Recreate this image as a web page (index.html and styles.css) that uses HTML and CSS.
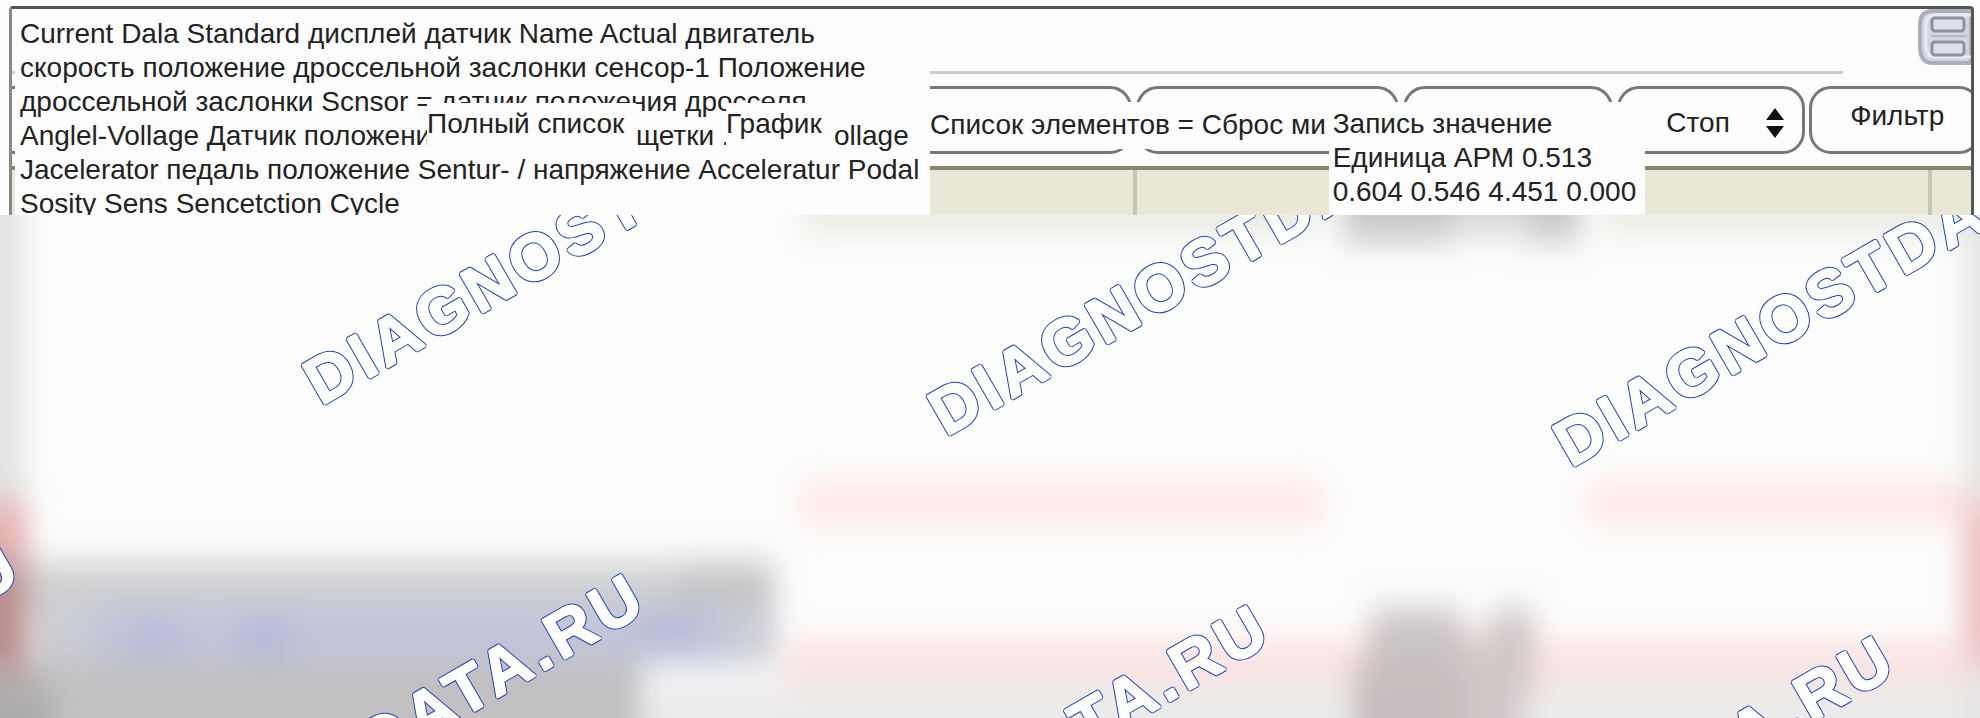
FILE: index.html
```
<!DOCTYPE html>
<html lang="ru">
<head>
    <meta charset="UTF-8">
    <meta name="viewport" content="width=device-width, initial-scale=1.0">
    <title>Current Data</title>
    <link rel="stylesheet" href="styles.css">
</head>
<body>
    <main class="panel">
        <div class="window">
            <div class="titlebar">
                <button class="layout-btn" type="button" aria-label="Layout">
                    <svg viewBox="0 0 54 56" width="54" height="56">
                        <path d="M54 2H16Q3 2 3 15V38Q3 54 16 54H54Z" fill="#d3d7e2" stroke="#aaafba" stroke-width="4"/>
                        <path d="M54 6H18Q9 6 9 16V38Q10 48 18 48H54" fill="none" stroke="#e8ebf3" stroke-width="3"/>
                        <path d="M14 27H50" stroke="#b4b9c6" stroke-width="2"/>
                        <rect x="15" y="9" width="32" height="13" rx="3" fill="#dde1ec" stroke="#8d93a0" stroke-width="3"/>
                        <rect x="15" y="33" width="32" height="13" rx="3" fill="#dde1ec" stroke="#8d93a0" stroke-width="3"/>
                    </svg>
                </button>
            </div>
            <div class="toolbar">
                <div class="tab"></div>
                <div class="tab"></div>
                <div class="tab"></div>
                <button class="tab stop" type="button">
                    <span>Стоп</span>
                    <svg viewBox="0 0 20 34" width="20" height="34">
                        <path d="M10 2L19 14H1ZM10 32L1 20H19Z" fill="#111"/>
                    </svg>
                </button>
                <button class="tab filter" type="button">Фильтр</button>
            </div>
            <div class="table-head">
                <div></div>
                <div></div>
                <div></div>
            </div>
        </div>

        <div class="labels">
            <div class="description">
                <p>Current Dala Standard дисплей датчик Name Actual двигатель</p>
                <p>скорость положение дроссельной заслонки сенсор-1 Положение</p>
                <p>дроссельной заслонки Scnsor = датчик положения дросселя</p>
                <div class="split">
                    <span class="cut">Anglel-Vollage Датчик положени</span>
                    <button class="chip" type="button">Полный список</button>
                    <span>щетки .</span>
                    <button class="chip" type="button">График</button>
                    <span>ollage</span>
                </div>
                <p>Jacelerator педаль положение Sentur- / напряжение Acceleratur Podal</p>
                <p>Sosity Sens Sencetction Cycle</p>
            </div>
            <button class="list-btn" type="button">Список элементов = Сброс ми</button>
            <div class="values">
                <p>Запись значение</p>
                <p>Единица АРМ 0.513</p>
                <p>0.604 0.546 4.451 0.000</p>
            </div>
        </div>
    </main>

    <section class="preview">
        <svg viewBox="0 0 1980 503" preserveAspectRatio="xMinYMin slice">
            <defs>
                <filter id="soft" x="-20%" y="-50%" width="140%" height="200%">
                    <feGaussianBlur stdDeviation="14 17"/>
                </filter>
            </defs>
            <!-- header remains and row bands -->
            <g filter="url(#soft)">
                <rect x="800" y="-80" width="520" height="100" fill="#ebebe5"/>
                <rect x="1600" y="-80" width="460" height="100" fill="#ebebe5"/>
                <rect x="1342" y="-80" width="110" height="107" fill="#c8c8c8"/>
                <rect x="1452" y="-80" width="76" height="100" fill="#d8d8d8"/>
                <rect x="1528" y="-80" width="52" height="107" fill="#c8c8c8"/>
                <rect x="800" y="269" width="522" height="38" fill="#fee3e2"/>
                <rect x="1588" y="269" width="400" height="38" fill="#fee3e2"/>
                <rect x="640" y="468" width="1400" height="120" fill="#ebebeb"/>
                <rect x="780" y="426" width="1200" height="44" fill="#fbe2e2"/>
            </g>
            <!-- text blocks -->
            <g filter="url(#soft)">
                <rect x="16" y="348" width="760" height="55" fill="#cecfcf"/>
                <rect x="30" y="390" width="746" height="60" fill="#cccdd4"/>
                <rect x="-60" y="446" width="702" height="140" fill="#c2c0c0"/>
                <rect x="92" y="395" width="640" height="50" fill="#c1c5da"/>
                <rect x="130" y="402" width="50" height="40" fill="#b6bbda"/>
                <rect x="240" y="402" width="50" height="40" fill="#b2b8dc"/>
                <rect x="640" y="396" width="56" height="40" fill="#b4b9d8"/>
                <rect x="676" y="348" width="94" height="38" fill="#c2c2c2"/>
                <rect x="1370" y="394" width="92" height="60" fill="#cac4c4"/>
                <rect x="1490" y="394" width="44" height="80" fill="#cec6c6"/>
                <rect x="1354" y="444" width="108" height="140" fill="#c6bebe"/>
                <rect x="1462" y="424" width="60" height="160" fill="#d0c8c8"/>
            </g>
            <!-- edges -->
            <g filter="url(#soft)">
                <rect x="-40" y="-80" width="64" height="430" fill="#e2e2e2"/>
                <rect x="1966" y="-80" width="60" height="680" fill="#e4e4e2"/>
                <rect x="-40" y="285" width="68" height="170" fill="#e6b4b4"/>
                <rect x="-40" y="345" width="68" height="115" fill="#b88e8e"/>
                <rect x="-40" y="470" width="90" height="120" fill="#aaa"/>
                <rect x="1964" y="290" width="60" height="160" fill="#ecc0be"/>
            </g>
            <g class="watermark-line">
                <g id="watermark">
                    <text transform="translate(321 191) rotate(-30)">DIAGNOSTDATA.RU</text>
                    <text transform="translate(946 222) rotate(-30)">DIAGNOSTDATA.RU</text>
                    <text transform="translate(1571 253) rotate(-30)">DIAGNOSTDATA.RU</text>
                    <text class="tail" transform="translate(26 363) rotate(-30)">DIAGNOSTDATA.RU</text>
                    <text class="tail" transform="translate(651 394) rotate(-30)">DIAGNOSTDATA.RU</text>
                    <text class="tail" transform="translate(1276 425) rotate(-30)">DIAGNOSTDATA.RU</text>
                    <text class="tail" transform="translate(1901 456) rotate(-30)">DIAGNOSTDATA.RU</text>
                </g>
            </g>
            <use class="watermark-fill" href="#watermark"/>
        </svg>
    </section>
</body>
</html>
```
FILE: styles.css
```
:root {
    --ink: #222;
    --line: #777;
    --beige: #e9e8d8;
}
* {
    box-sizing: border-box;
}
body {
    margin: 0;
    min-height: 100vh;
    display: flex;
    flex-direction: column;
    overflow: hidden;
    background: #fdfdfd;
    color: var(--ink);
    font-family: "Liberation Sans", Arial, sans-serif;
    font-size: 28px;
    line-height: 34px;
}
p {
    margin: 0;
}
button {
    margin: 0;
    padding: 0;
    border: none;
    background: #fdfdfd;
    color: inherit;
    font: inherit;
    text-align: left;
    white-space: nowrap;
    cursor: pointer;
}
.panel {
    display: grid;
    margin: 6px 6px 0 9px;
    border: 3px solid #555;
    border-bottom: none;
    border-left-color: #888;
    border-radius: 4px 4px 0 0;
}
.window, .labels {
    grid-area: 1 / 1;
    min-width: 0;
}
.window {
    overflow: hidden;
}
.titlebar {
    display: flex;
    justify-content: flex-end;
    height: 65px;
    margin-bottom: 12px;
    background: linear-gradient(#ccc, #ccc) left bottom / calc(100% - 128px) 3px no-repeat;
}
.layout-btn {
    height: 56px;
}
.layout-btn svg {
    display: block;
}
.toolbar {
    display: grid;
    grid-template-columns: 1145fr 263fr 211fr 188fr 172fr;
    column-gap: 4px;
    height: 68px;
    margin: 0 -10px 0 -24px;
}
.tab {
    border: 3px solid var(--line);
    border-radius: 22px;
}
.stop {
    display: flex;
    align-items: center;
    justify-content: space-between;
    padding: 6px 17px 0 46px;
}
.filter {
    padding: 0 0 8px 38px;
}
.table-head {
    display: grid;
    grid-template-columns: 1121fr 795fr 43fr;
    height: 49px;
    margin-top: 12px;
    border-top: 4px solid #85856f;
    background: var(--beige);
}
.table-head div + div {
    border-left: 4px solid #c6c5b6;
}
.labels {
    display: grid;
    grid-template-columns: 919fr 399fr 317fr 326fr;
    pointer-events: none;
    white-space: nowrap;
}
.labels button {
    pointer-events: auto;
}
.description {
    margin-left: 3px;
    padding: 8px 0 0 5px;
    height: 206px;
    overflow: hidden;
    background: #fdfdfd;
}
.split {
    display: grid;
    grid-template-columns: 407px 209px 90px 108px auto;
    height: 34px;
}
.cut {
    overflow: hidden;
}
.chip {
    height: 46px;
    margin-top: -16px;
    padding-bottom: 4px;
    line-height: 42px;
}
.list-btn {
    align-self: start;
    height: 47px;
    margin-top: 93px;
    padding-bottom: 2px;
    overflow: hidden;
}
.values {
    margin-top: 93px;
    padding: 5px 0 0 4px;
    background: #fdfdfd;
}
.preview {
    flex: 1;
    min-height: 0;
}
.preview svg {
    display: block;
    width: 100%;
    height: 100%;
}
.watermark-line, .watermark-fill {
    fill: #fff;
    stroke-linejoin: bevel;
    font-size: 65px;
    font-weight: bold;
    letter-spacing: 5px;
}
.watermark-line {
    stroke: #1c3fb0;
    stroke-width: 4px;
}
.watermark-fill {
    stroke: #fff;
    stroke-width: 2px;
}
.tail {
    text-anchor: end;
}
```
